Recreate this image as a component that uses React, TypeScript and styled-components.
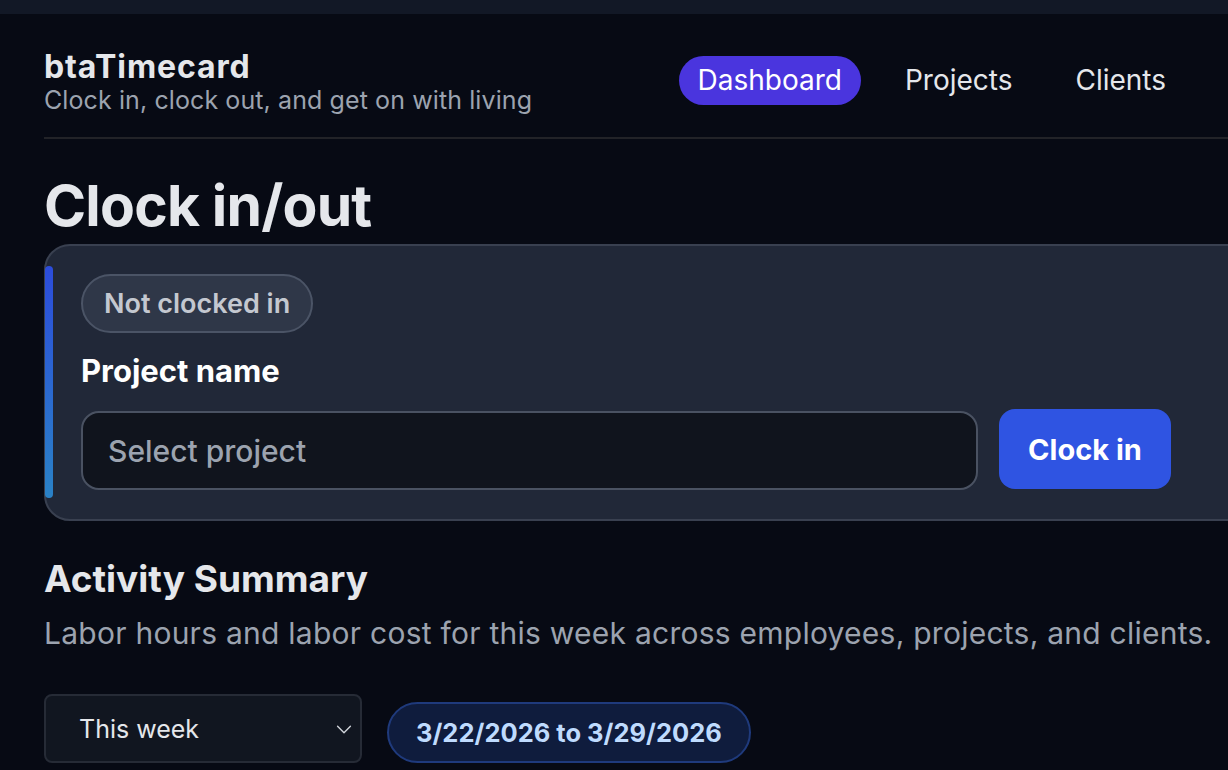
import styled, { createGlobalStyle } from "styled-components";

const GlobalStyle = createGlobalStyle`
    html, body {
        margin: 0;
        padding: 0;
        background-color: #070a14;
        overflow: hidden;
    }
    body {
        font-family: Inter, "Noto Sans", "Liberation Sans", sans-serif;
        color: #e5e7eb;
    }
    * {
        box-sizing: border-box;
    }
`;

const TopStrip = styled.div`
    height: 14px;
    background-color: #121826;
`;

const Shell = styled.div`
    padding: 0 0 0 44px;
    width: 100%;
`;

const Header = styled.header`
    display: flex;
    align-items: center;
    justify-content: space-between;
    padding: 34px 43px 22px 0;
    border-bottom: 2px solid #222328;
`;

const Brand = styled.div`
    display: flex;
    flex-direction: column;
`;

const BrandName = styled.div`
    font-size: 32px;
    font-weight: 700;
    line-height: 37px;
    letter-spacing: 0.9px;
    color: #e5e7eb;
`;

const Tagline = styled.div`
    font-size: 25px;
    line-height: 30px;
    letter-spacing: 0.1px;
    color: #9ca3af;
`;

const Nav = styled.nav`
    display: flex;
    gap: 25px;
    margin-top: -2px;
`;

const NavLink = styled.a<{ $active?: boolean }>`
    font-size: 28px;
    line-height: 49px;
    padding: 0 19px;
    border-radius: 25px;
    color: ${p => (p.$active ? "#ffffff" : "#e5e7eb")};
    background-color: ${p => (p.$active ? "#4a35de" : "transparent")};
    text-decoration: none;
`;

const PageTitle = styled.h1`
    margin: 33px 0 4px;
    font-size: 57px;
    font-weight: 700;
    line-height: 68px;
    letter-spacing: -0.8px;
    color: #e5e7eb;
`;

const Card = styled.section`
    position: relative;
    width: calc(100% + 40px);
    background-color: #212838;
    border: 2px solid #394050;
    border-radius: 26px;
    padding: 28px 0 29px 35px;
    display: flex;
    flex-direction: column;
    align-items: flex-start;

    &::before {
        content: "";
        position: absolute;
        left: -1px;
        top: 20px;
        bottom: 21px;
        width: 8px;
        border-radius: 4px;
        background: linear-gradient(180deg, #2c4cdb 0%, #2a82c6 100%);
    }
`;

const StatusBadge = styled.span`
    font-size: 27px;
    font-weight: 600;
    line-height: 31px;
    padding: 12px 21px;
    border-radius: 30px;
    background-color: #2f3748;
    border: 2px solid #4b5466;
    color: #c4c8d0;
`;

const FieldLabel = styled.label`
    margin: 20px 0 22px;
    font-size: 31px;
    font-weight: 700;
    line-height: 36px;
    color: #ffffff;
`;

const FieldRow = styled.div`
    display: grid;
    grid-template-columns: 897px 172px;
    gap: 21px;
    align-items: center;
`;

const ProjectSelect = styled.div`
    height: 79px;
    display: flex;
    align-items: center;
    padding: 0 25px;
    background-color: #10141d;
    border: 2px solid #4a5262;
    border-radius: 18px;
    font-size: 30px;
    font-weight: 500;
    color: #9ca3af;
`;

const ClockButton = styled.button`
    height: 80px;
    margin-top: -3px;
    border: none;
    border-radius: 16px;
    background-color: #2f54e2;
    color: #ffffff;
    font-family: inherit;
    font-size: 29px;
    font-weight: 700;
    cursor: pointer;
`;

const SectionTitle = styled.h2`
    margin: 36px 0 0;
    font-size: 37px;
    font-weight: 700;
    line-height: 44px;
    color: #e5e7eb;
`;

const SectionText = styled.p`
    margin: 14px 0 0;
    font-size: 30px;
    line-height: 36px;
    letter-spacing: 0.25px;
    color: #9ca3af;
`;

const Controls = styled.div`
    display: flex;
    align-items: flex-end;
    gap: 25px;
    margin-top: 43px;
`;

const RangeSelect = styled.div`
    width: 318px;
    height: 69px;
    display: flex;
    align-items: center;
    justify-content: space-between;
    padding: 0 5px 0 33px;
    background-color: #111620;
    border: 2px solid #262b36;
    border-radius: 8px;
    font-size: 25px;
    color: #e5e7eb;
`;

const DateRange = styled.span`
    height: 61px;
    display: flex;
    align-items: center;
    padding: 0 27px;
    background-color: #0f1c3d;
    border: 2px solid #1f3a7c;
    border-radius: 31px;
    font-size: 25.5px;
    font-weight: 700;
    color: #bfdbfe;
`;

function Chevron(): JSX.Element {
    return (
        <svg width="22" height="22" viewBox="0 0 24 24" fill="none" stroke="#d1d5db" strokeWidth="1.5" strokeLinecap="round" strokeLinejoin="round">
            <path d="M5 9l7 7 7-7" />
        </svg>
    );
}

function App(): JSX.Element {
    return (
        <>
            <GlobalStyle />
            <TopStrip />
            <Shell>
                <Header>
                    <Brand>
                        <BrandName>btaTimecard</BrandName>
                        <Tagline>Clock in, clock out, and get on with living</Tagline>
                    </Brand>
                    <Nav>
                        <NavLink $active>Dashboard</NavLink>
                        <NavLink>Projects</NavLink>
                        <NavLink>Clients</NavLink>
                    </Nav>
                </Header>

                <PageTitle>Clock in/out</PageTitle>
                <Card>
                    <StatusBadge>Not clocked in</StatusBadge>
                    <FieldLabel>Project name</FieldLabel>
                    <FieldRow>
                        <ProjectSelect>Select project</ProjectSelect>
                        <ClockButton>Clock in</ClockButton>
                    </FieldRow>
                </Card>

                <SectionTitle>Activity Summary</SectionTitle>
                <SectionText>Labor hours and labor cost for this week across employees, projects, and clients.</SectionText>
                <Controls>
                    <RangeSelect>
                        This week
                        <Chevron />
                    </RangeSelect>
                    <DateRange>3/22/2026 to 3/29/2026</DateRange>
                </Controls>
            </Shell>
        </>
    );
}

export default App;
